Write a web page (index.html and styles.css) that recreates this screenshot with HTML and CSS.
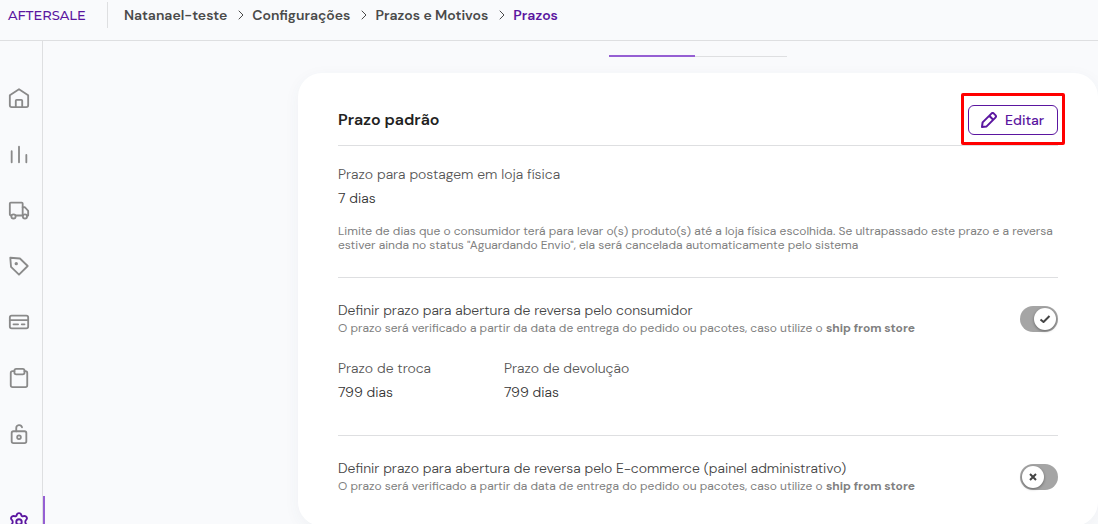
FILE: index.html
```
<!DOCTYPE html>
<html lang="pt-BR">
<head>
    <meta charset="UTF-8">
    <meta name="viewport" content="width=device-width, initial-scale=1.0">
    <title>Prazos</title>
    <link rel="stylesheet" href="styles.css">
</head>
<body>
    <header class="topbar">
        <a class="logo" href="#" aria-label="Aftersale">AFTERSALE</a>
        <nav class="breadcrumb" aria-label="Navegação">
            <a href="#">Natanael-teste</a>
            <svg class="chevron" viewBox="0 0 6 10"><path d="M1 1l4 4-4 4"/></svg>
            <a href="#">Configurações</a>
            <svg class="chevron" viewBox="0 0 6 10"><path d="M1 1l4 4-4 4"/></svg>
            <a href="#">Prazos e Motivos</a>
            <svg class="chevron" viewBox="0 0 6 10"><path d="M1 1l4 4-4 4"/></svg>
            <a href="#" class="current" aria-current="page">Prazos</a>
        </nav>
    </header>
    <div class="layout">
        <nav class="sidebar" aria-label="Menu">
            <a href="#" aria-label="Início">
                <svg viewBox="0 0 24 24"><path d="M2 9l10-6.500L22 9v11a2 2 0 0 1-2 2H4a2 2 0 0 1-2-2z"/><path d="M8.500 21.500V15a1 1 0 0 1 1-1h5a1 1 0 0 1 1 1v6.500"/></svg>
            </a>
            <a href="#" aria-label="Relatórios">
                <svg viewBox="0 0 24 24"><path d="M4 9v12M12 4v17M20 13v8"/></svg>
            </a>
            <a href="#" aria-label="Envios">
                <svg viewBox="0 0 24 24"><path d="M3.500 18H3a1 1 0 0 1-1-1V5a1 1 0 0 1 1-1h12a1 1 0 0 1 1 1v13H8.500"/><path d="M16 9h2.500L22 13v5h-1"/><circle cx="6" cy="19" r="2.300"/><circle cx="18.500" cy="19" r="2.300"/></svg>
            </a>
            <a href="#" aria-label="Etiquetas">
                <svg viewBox="0 0 24 24"><path d="M2.500 3l10.500.8 8.500 8.200-9.500 9.500L3.300 13z"/><circle class="dot" cx="9" cy="9.500" r="1.800"/></svg>
            </a>
            <a href="#" aria-label="Pagamentos">
                <svg viewBox="0 0 24 24"><rect x="2" y="5" width="20" height="14" rx="2"/><path d="M2 10h20M6 14.500h5M15 14.500h3"/></svg>
            </a>
            <a href="#" aria-label="Pedidos">
                <svg viewBox="0 0 24 24"><path d="M7 4.500H5a2 2 0 0 0-2 2V20a2 2 0 0 0 2 2h14a2 2 0 0 0 2-2V6.500a2 2 0 0 0-2-2h-1"/><rect x="7" y="2" width="11" height="6" rx="2"/></svg>
            </a>
            <a href="#" aria-label="Acessos">
                <svg viewBox="0 0 24 24"><rect x="4" y="9" width="16" height="13" rx="2"/><path d="M9 9V5.500a3.200 3.200 0 0 1 6.300-.8"/><circle cx="12" cy="15.500" r="2"/></svg>
            </a>
            <a href="#" class="active" aria-label="Configurações">
                <svg viewBox="0 0 24 24"><path d="M9.500 4.500c.5-3 4.500-3 5 0 .3 1 1.300 1.600 2.300 1.200 3-1.200 5.200 2.200 2.800 4.300-1 .9-1 3.100 0 4 2.400 2.100.2 5.500-2.800 4.300-1-.4-2 .2-2.300 1.200-.5 3-4.500 3-5 0-.3-1-1.300-1.600-2.300-1.200-3 1.200-5.200-2.200-2.800-4.300 1-.9 1-3.100 0-4C2 7.900 4.200 4.500 7.200 5.700c1 .4 2-.2 2.300-1.200z"/><circle cx="12" cy="12" r="3"/></svg>
            </a>
        </nav>
        <main class="content">
            <div class="tabs">
                <span class="tab tab-active"></span>
                <span class="tab"></span>
            </div>
            <section class="card">
                <div class="card-header">
                    <h1>Prazo padrão</h1>
                    <div class="edit">
                        <button type="button">
                            <svg viewBox="0 0 16 16"><path d="M1 15l.6-4.600L10.400 1.600a1.800 1.800 0 0 1 2.500 0l1.500 1.500a1.800 1.800 0 0 1 0 2.500L5.600 14.400zM8.300 3.800l3.900 3.900"/></svg>
                            Editar
                        </button>
                        <span class="highlight"></span>
                    </div>
                </div>
                <div class="block">
                    <div class="field">
                        <div class="label">Prazo para postagem em loja física</div>
                        <div class="value">7 dias</div>
                    </div>
                    <p class="note">Limite de dias que o consumidor terá para levar o(s) produto(s) até a loja física escolhida. Se ultrapassado este prazo e a reversa estiver ainda no status "Aguardando Envio", ela será cancelada automaticamente pelo sistema</p>
                </div>
                <div class="block">
                    <div class="setting">
                        <div class="setting-text">
                            <label class="setting-title" for="prazo-consumidor">Definir prazo para abertura de reversa pelo consumidor</label>
                            <p class="hint">O prazo será verificado a partir da data de entrega do pedido ou pacotes, caso utilize o <strong>ship from store</strong></p>
                        </div>
                        <div class="switch">
                            <input type="checkbox" id="prazo-consumidor" checked disabled>
                            <span class="thumb"><svg viewBox="0 0 12 12"><path d="M1.500 6.500l3 2.500 6-6"/></svg></span>
                        </div>
                    </div>
                    <div class="fields">
                        <div class="field">
                            <div class="label">Prazo de troca</div>
                            <div class="value">799 dias</div>
                        </div>
                        <div class="field">
                            <div class="label">Prazo de devolução</div>
                            <div class="value">799 dias</div>
                        </div>
                    </div>
                </div>
                <div class="block">
                    <div class="setting">
                        <div class="setting-text">
                            <label class="setting-title" for="prazo-ecommerce">Definir prazo para abertura de reversa pelo E-commerce (painel administrativo)</label>
                            <p class="hint">O prazo será verificado a partir da data de entrega do pedido ou pacotes, caso utilize o <strong>ship from store</strong></p>
                        </div>
                        <div class="switch">
                            <input type="checkbox" id="prazo-ecommerce" disabled>
                            <span class="thumb"><svg viewBox="0 0 12 12"><path d="M3 3l6 6M9 3l-6 6"/></svg></span>
                        </div>
                    </div>
                </div>
            </section>
        </main>
    </div>
</body>
</html>
```

FILE: styles.css
```
* {
    box-sizing: border-box;
}
body {
    margin: 0;
    height: 100vh;
    overflow: hidden;
    display: flex;
    flex-direction: column;
    background-color: #f9fafc;
    color: #444;
    font-family: "DM Sans", Inter, "Liberation Sans", sans-serif;
    font-size: 14px;
    line-height: 20px;
}
h1, p {
    margin: 0;
}
a {
    color: inherit;
    text-decoration: none;
}
svg {
    display: block;
    fill: none;
    stroke: currentColor;
    stroke-width: 2;
    stroke-linecap: round;
    stroke-linejoin: round;
}
.topbar {
    display: flex;
    flex: none;
    height: 41px;
    padding: 2px 8px 12px;
    border-bottom: 1px solid #dedfe1;
}
.logo {
    display: flex;
    align-items: center;
    width: 100px;
    border-right: 1px solid #dedfe1;
    color: #5b16a0;
    font-family: Montserrat, "DejaVu Sans", sans-serif;
    font-size: 13px;
    font-weight: 500;
}
.breadcrumb {
    display: flex;
    align-items: center;
    gap: 8px;
    padding-left: 16px;
    color: #4a4a4a;
    font-weight: 600;
}
.breadcrumb .current {
    color: #5b16a0;
}
.chevron {
    width: 6px;
    height: 10px;
    margin-left: 3px;
    stroke-width: 1;
}
.layout {
    display: flex;
    flex: 1;
    min-height: 0;
}
.sidebar {
    display: flex;
    flex: none;
    flex-direction: column;
    width: 43px;
    padding-top: 29px;
    border-right: 1px solid #dedfe1;
    color: #8a8a8a;
}
.sidebar a {
    position: relative;
    display: flex;
    flex: none;
    align-items: center;
    height: 56px;
    padding-left: 8px;
}
.sidebar svg {
    width: 22px;
    height: 22px;
}
.sidebar .dot {
    fill: currentColor;
    stroke: none;
}
.sidebar .active {
    height: 52px;
    margin-top: 34px;
    color: #5b16a0;
}
.sidebar .active::after {
    content: "";
    position: absolute;
    top: 0;
    right: -3px;
    width: 2px;
    height: 100%;
    background-color: #955fd3;
}
.content {
    flex: 1;
    padding: 14px 0 0 255px;
}
.tabs {
    display: flex;
    justify-content: center;
    height: 18px;
}
.tab {
    width: 92px;
    height: 2px;
    border-bottom: 1px solid #dedfe1;
}
.tab-active {
    width: 86px;
    border-bottom: 2px solid #955fd3;
}
.card {
    padding: 32px 40px 30px;
    border-radius: 24px;
    background-color: #fff;
    box-shadow: 0 4px 16px rgba(60, 70, 100, 0.05);
}
.card-header {
    display: flex;
    align-items: center;
    justify-content: space-between;
    padding-bottom: 10px;
    border-bottom: 1px solid #dedfe1;
}
h1 {
    color: #222;
    font-size: 16px;
    font-weight: 600;
}
.edit {
    position: relative;
}
.edit button {
    display: flex;
    align-items: center;
    gap: 8px;
    width: 90px;
    height: 30px;
    padding: 0 12px;
    border: 1px solid #5b16a0;
    border-radius: 6px;
    background-color: #fff;
    color: #5b16a0;
    font: inherit;
    font-weight: 500;
}
.edit svg {
    flex: none;
    width: 16px;
    height: 16px;
}
.highlight {
    position: absolute;
    inset: -12px -7px -10px;
    border: 3px solid #f00;
    border-radius: 2px;
    pointer-events: none;
}
.block {
    padding: 18px 0 25px;
}
.block + .block {
    padding-top: 22px;
    border-top: 1px solid #dedfe1;
}
.block:last-child {
    padding-bottom: 0;
}
.label {
    color: #555;
    font-weight: 300;
}
.value {
    margin-top: 4px;
    color: #333;
    font-weight: 300;
}
.note, .hint {
    color: #808080;
    font-size: 12px;
    line-height: 14px;
}
.note {
    margin-top: 16px;
}
.hint {
    margin-top: 1px;
}
.setting {
    display: flex;
    align-items: center;
    justify-content: space-between;
    min-height: 38px;
}
.setting-text {
    align-self: flex-start;
}
.setting-title {
    display: block;
    color: #444;
    font-weight: 300;
}
.fields {
    display: flex;
    margin-top: 20px;
    padding-bottom: 8px;
}
.fields .field {
    width: 166px;
}
.switch {
    position: relative;
    width: 38px;
    height: 26px;
}
.switch input {
    appearance: none;
    display: block;
    width: 38px;
    height: 26px;
    margin: 0;
    border-radius: 13px;
    background-color: #a5a5a5;
}
.thumb {
    position: absolute;
    top: 2px;
    left: 2px;
    display: grid;
    place-items: center;
    width: 22px;
    height: 22px;
    border-radius: 50%;
    background-color: #fff;
    box-shadow: 0 1px 3px rgba(0, 0, 0, 0.4);
    color: #444;
    pointer-events: none;
}
.switch input:checked + .thumb {
    left: 14px;
}
.thumb svg {
    width: 12px;
    height: 12px;
    stroke-linecap: butt;
}
```
